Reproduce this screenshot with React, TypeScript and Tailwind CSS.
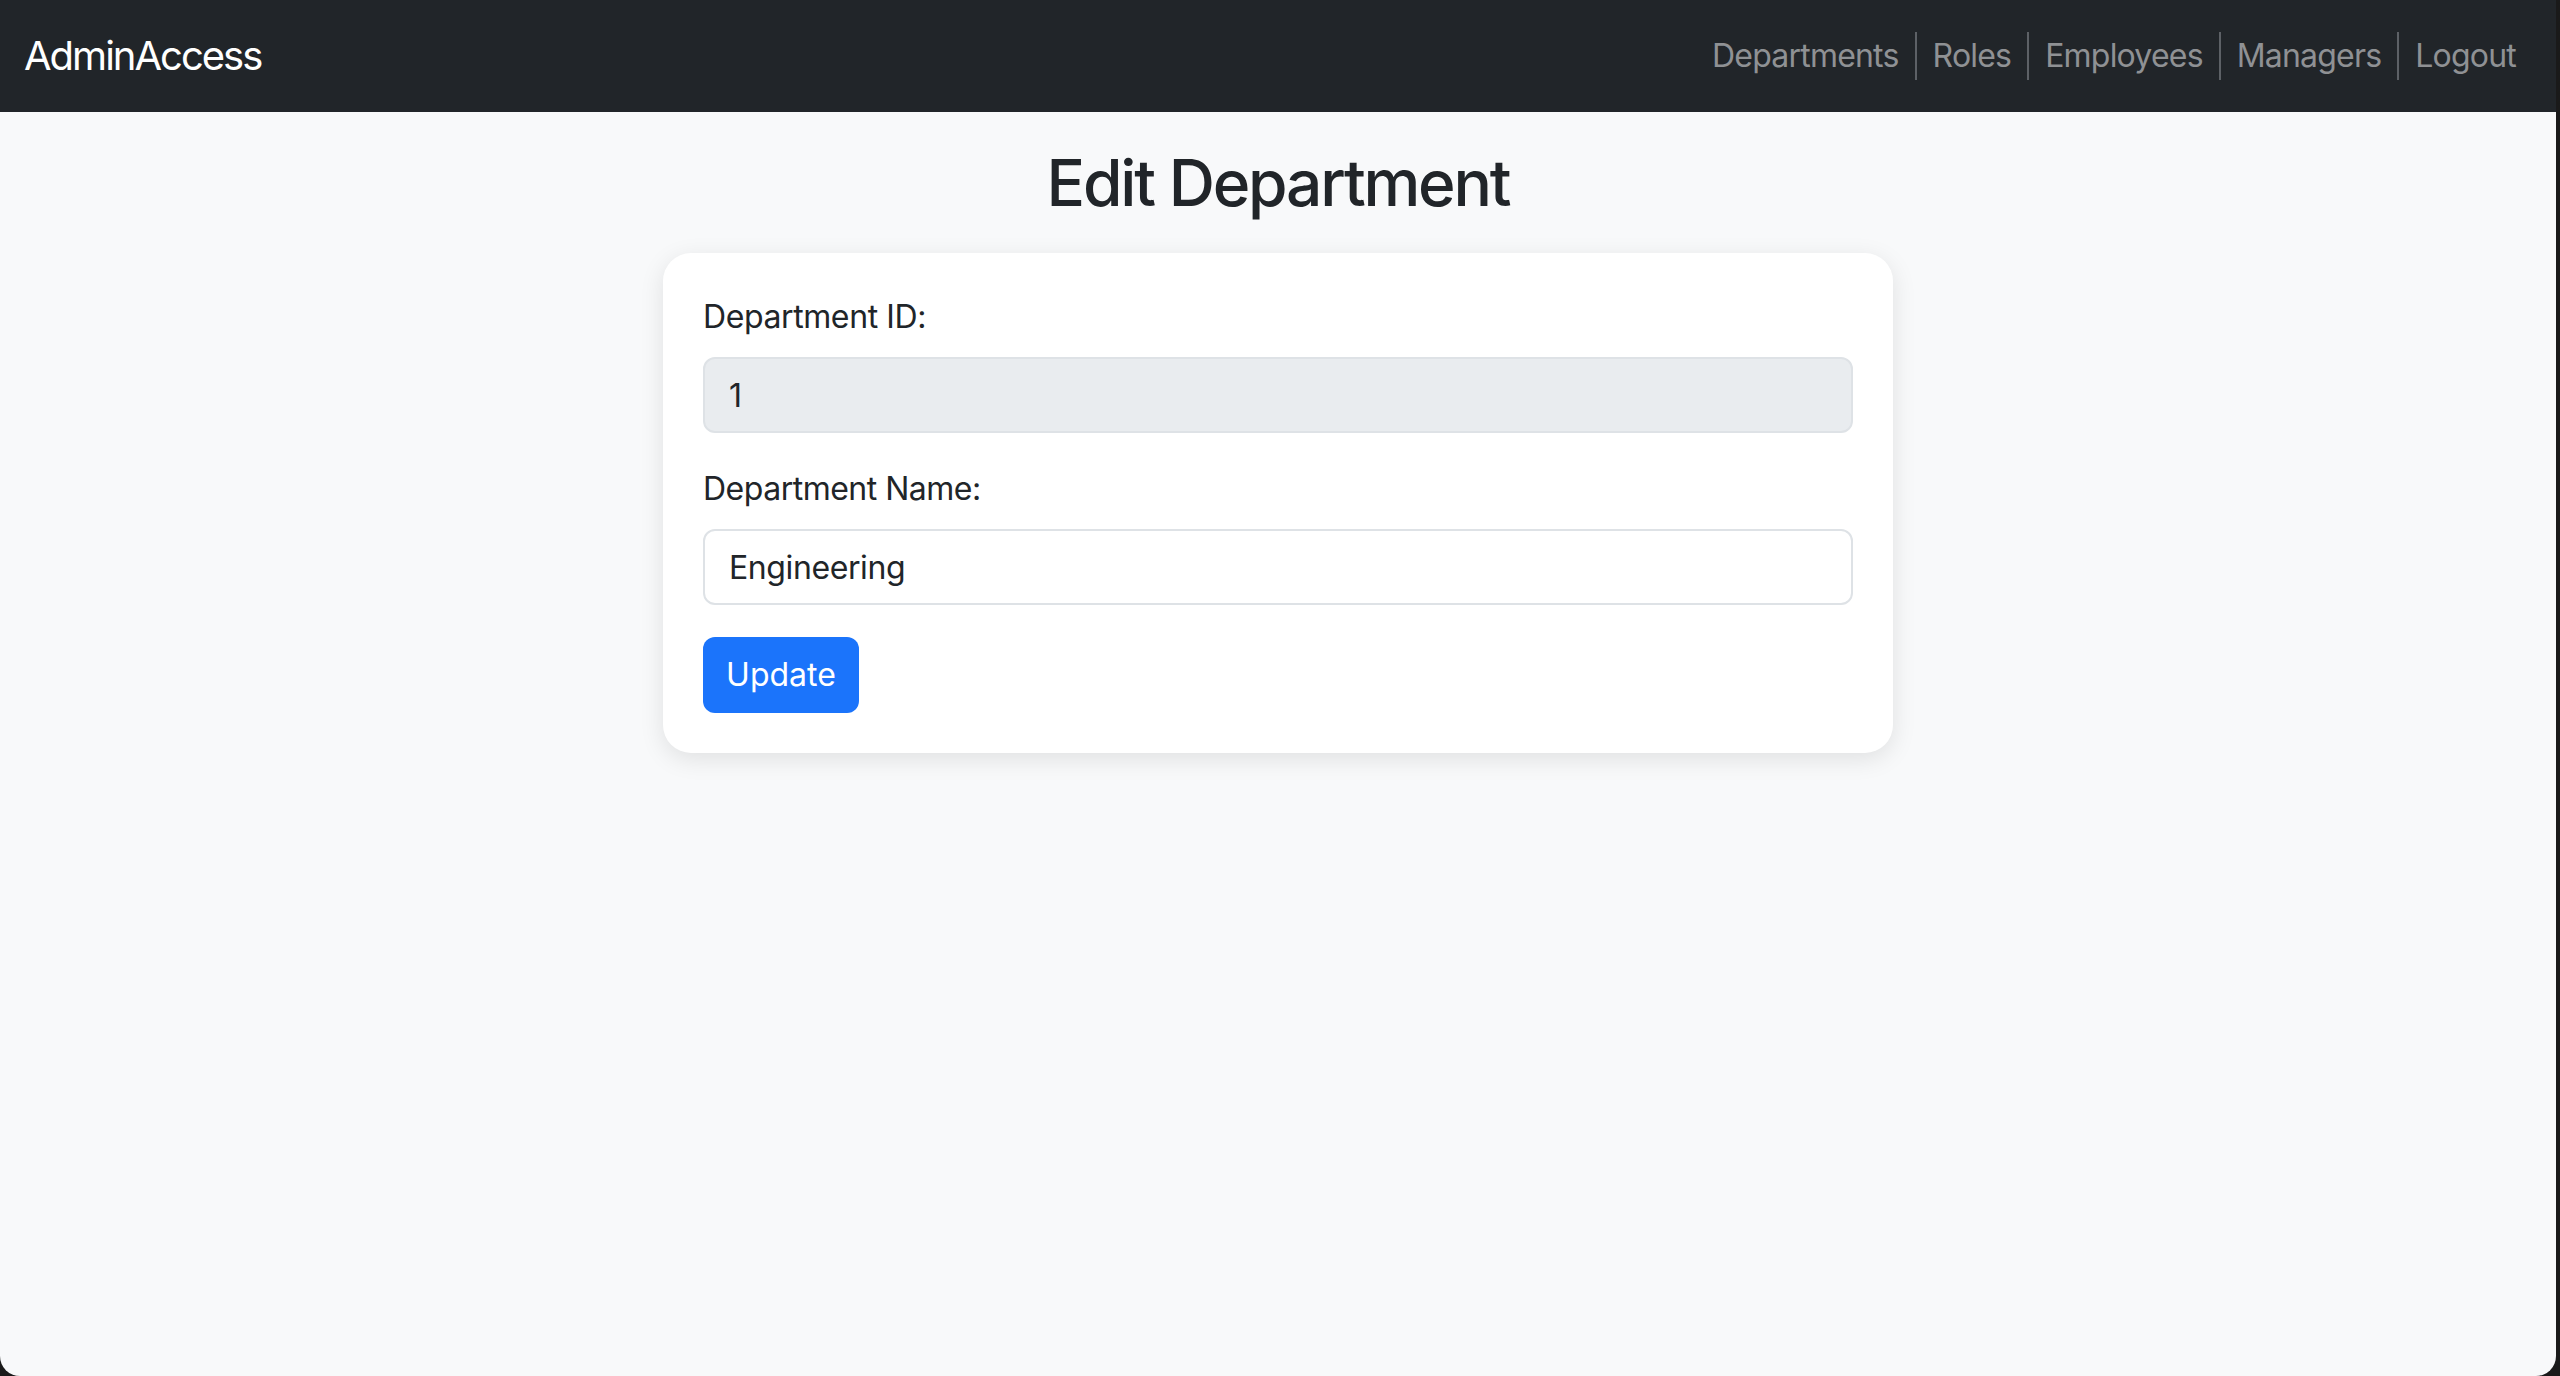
import React from 'react'

const navLinks = ['Departments', 'Roles', 'Employees', 'Managers', 'Logout']

const font = { fontFamily: 'Inter, "Noto Sans", sans-serif' }

const App = () => {
  return (
    <div className="min-h-screen bg-[#1a1a1a]" style={font}>
      <div className="flex h-[1376px] w-[2556px] flex-col overflow-hidden rounded-b-[20px] bg-[#f8f9fa] text-[#212529]">
        {/* navbar */}
        <nav className="flex h-[112px] shrink-0 items-center justify-between bg-[#212529] px-[24px]">
          <a className="py-[10px] text-[40px] leading-[60px] tracking-[-2px] text-white">AdminAccess</a>
          <ul className="flex items-center">
            {navLinks.map((link, i) => (
              <li key={link} className="flex items-center">
                {i > 0 && <span className="h-[48px] w-[2px] bg-[#5d6166]"></span>}
                <a className="px-[16px] py-[16px] text-[32px] leading-[48px] tracking-[-0.8px] text-[#8f9194]">{link}</a>
              </li>
            ))}
          </ul>
        </nav>

        {/* content */}
        <div className="flex flex-col items-center pt-[32px]">
          <h2 className="text-[64px] font-medium leading-[77px] tracking-[-2.2px]">Edit Department</h2>

          <div className="mt-[32px] w-[1230px] rounded-[28px] bg-white p-[40px] shadow-[0_6px_24px_rgba(0,0,0,0.1)]">
            <div className="mb-[32px]">
              <label className="mb-[16px] block text-[32px] leading-[48px] tracking-[-0.4px]">Department ID:</label>
              <input
                type="text"
                value="1"
                disabled
                readOnly
                className="block h-[76px] w-full rounded-[12px] border-2 border-[#dee2e6] bg-[#e9ecef] px-[24px] text-[32px] leading-[48px] text-[#212529] outline-none"
              />
            </div>
            <div className="mb-[32px]">
              <label className="mb-[16px] block text-[32px] leading-[48px] tracking-[-0.5px]">Department Name:</label>
              <input
                type="text"
                defaultValue="Engineering"
                className="block h-[76px] w-full rounded-[12px] border-2 border-[#dee2e6] bg-white px-[24px] text-[32px] leading-[48px] tracking-[-0.4px] text-[#212529] outline-none"
              />
            </div>
            <button className="h-[76px] w-[156px] rounded-[12px] bg-[#1b74fb] text-[32px] leading-[48px] text-white">
              Update
            </button>
          </div>
        </div>
      </div>
    </div>
  )
}

export default App
